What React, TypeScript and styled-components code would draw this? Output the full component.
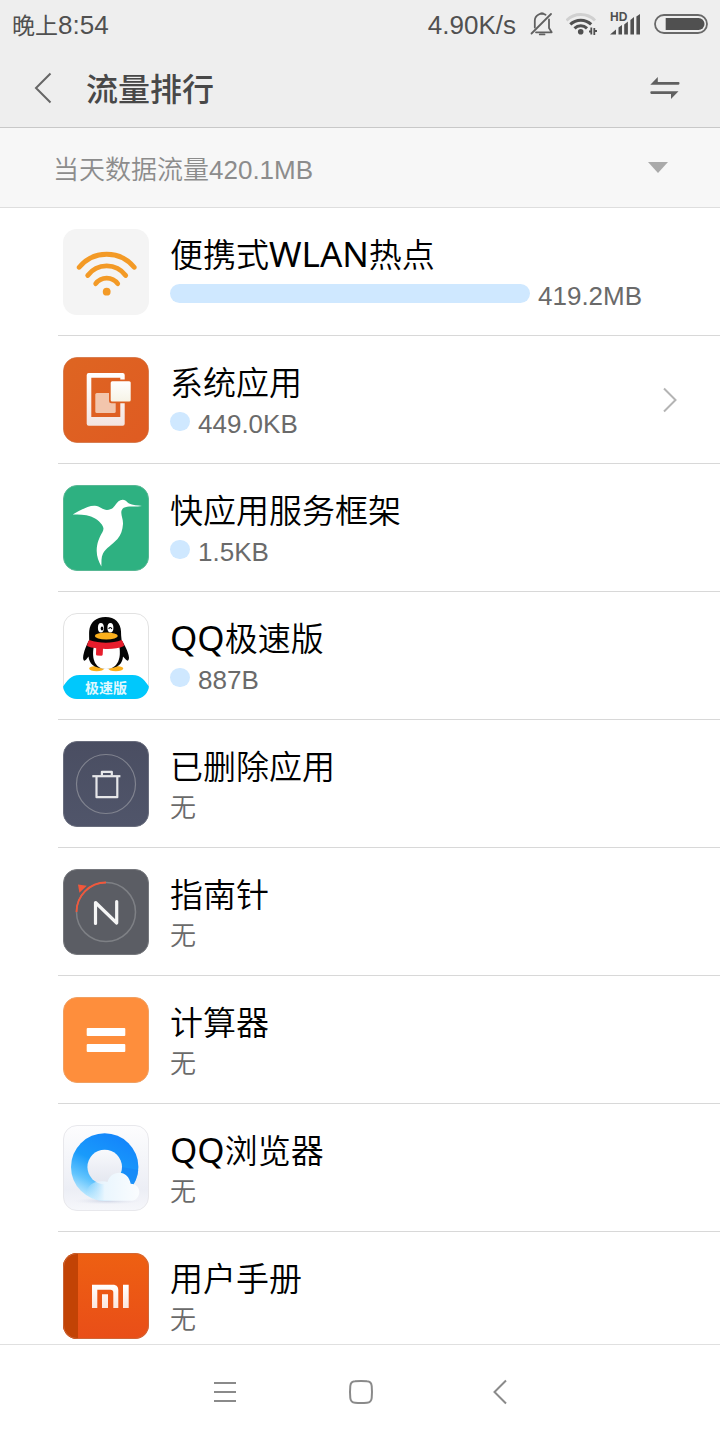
import React from "react";
import styled, { createGlobalStyle } from "styled-components";

const GlobalStyle = createGlobalStyle`
  *, *::before, *::after { box-sizing: border-box; }
  body {
    margin: 0;
    background: #fff;
    font-family: "Liberation Sans", "Noto Sans CJK SC", sans-serif;
    color: #000;
  }
  button, select {
    margin: 0;
    padding: 0;
    border: 0;
    background: none;
    color: inherit;
    font: inherit;
    cursor: pointer;
  }
  svg { display: block; flex: none; }
`;

const Screen = styled.div`
  display: flex;
  flex-direction: column;
  height: 100vh;
  overflow: hidden;
`;

const TopArea = styled.header`
  flex: none;
  background: #eee;
  border-bottom: 1px solid #c8c8c8;
`;

const StatusBar = styled.div`
  display: flex;
  align-items: center;
  justify-content: space-between;
  height: 48px;
  padding: 0 12px;
  font-size: 26px;
  line-height: 48px;
  color: #505050;
`;

const Clock = styled.span`
  display: flex;
  align-items: baseline;
  padding-top: 2px;
`;

const ClockPeriod = styled.span`
  font-size: 23px;
`;

const StatusIcons = styled.div`
  display: flex;
  align-items: center;
  gap: 12px;
`;

const NetworkSpeed = styled.span`
  padding: 2px 2px 0 0;
`;

const TitleBar = styled.div`
  display: flex;
  align-items: center;
  height: 79px;
  padding: 0 40px 0 22px;
`;

const BackButton = styled.button`
  display: flex;
  width: 64px;
  padding-left: 12px;
`;

const Title = styled.h1`
  flex: 1;
  margin: 0;
  padding-top: 5px;
  font-size: 32px;
  line-height: 48px;
  font-weight: 500;
  color: #484848;
`;

const IconButton = styled.button`
  display: flex;
`;

const FilterBar = styled.div`
  display: flex;
  align-items: center;
  flex: none;
  height: 80px;
  padding: 0 52px 0 53px;
  background: #f7f7f7;
  border-bottom: 1px solid #dedede;
`;

const RangeSelect = styled.select`
  flex: 1;
  height: 79px;
  padding-top: 5px;
  appearance: none;
  font-size: 26px;
  font-weight: 350;
  color: #8c8c8c;
  outline: none;
`;

const AppList = styled.ul`
  flex: 1;
  min-height: 0;
  margin: 0;
  padding: 0 0 0 58px;
  list-style: none;
  overflow-y: auto;
  scrollbar-width: none;
`;

const AppItem = styled.li`
  display: flex;
  align-items: center;
  gap: 21px;
  height: 128px;
  padding: 0 41px 0 5px;
  border-bottom: 1px solid #d8d8d8;
`;

const AppBody = styled.div`
  flex: 1;
  min-width: 0;
  padding-top: 5px;
`;

const AppName = styled.div`
  font-family: "Noto Sans", "Noto Sans CJK SC", sans-serif;
  font-size: 33px;
  line-height: 44px;
  font-weight: 350;
  white-space: nowrap;
`;

const LatinPart = styled.span`
  font-size: 35px;
  line-height: 1;
  font-weight: 400;
`;

const Usage = styled.div`
  display: flex;
  align-items: center;
  gap: 8px;
  height: 38px;
  font-size: 26px;
  line-height: 38px;
  font-weight: 350;
  color: #6a6a6a;
`;

const UsageBar = styled.span`
  flex: none;
  min-width: 20px;
  height: 19px;
  margin-bottom: 5px;
  border-radius: 10px;
  background: #cfe8ff;
`;

const NavBar = styled.nav`
  display: flex;
  align-items: center;
  justify-content: center;
  flex: none;
  height: 96px;
  padding-bottom: 2px;
  border-top: 1px solid #e0e0e0;
  background: #fff;
`;

const NavButton = styled.button`
  display: flex;
  justify-content: center;
  width: 137px;
`;

const Tile = ({ children }: { children: React.ReactNode }) => (
  <svg width="86" height="86" viewBox="0 0 86 86" aria-hidden="true">
    {children}
  </svg>
);

const HotspotIcon = () => (
  <Tile>
    <rect width="86" height="86" rx="14" fill="#f4f4f4" />
    <g fill="none" stroke="#f39a26" strokeWidth="4.8" strokeLinecap="round">
      <path d="M16.2 38.3A35.500 35.500 0 0 1 71.2 38.3" />
      <path d="M24.700 46.500A23.500 23.500 0 0 1 62.700 46.500" />
      <path d="M32.700 54.700A13.500 13.500 0 0 1 54.700 54.700" />
    </g>
    <circle cx="43.7" cy="62.7" r="3.9" fill="#f39a26" />
  </Tile>
);

const SystemIcon = () => (
  <Tile>
    <defs>
      <linearGradient id="sysBg" x1="0" y1="0" x2="1" y2="1">
        <stop offset="0" stopColor="#de6522" />
        <stop offset="1" stopColor="#df5b22" />
      </linearGradient>
      <linearGradient id="sysPhone" x1="0" y1="0" x2="0" y2="1">
        <stop offset="0" stopColor="#fff" />
        <stop offset="1" stopColor="#f3e4e0" />
      </linearGradient>
      <linearGradient id="sysCard" x1="0" y1="0" x2="0" y2="1">
        <stop offset="0" stopColor="#fff" />
        <stop offset="1" stopColor="#f6f3e6" />
      </linearGradient>
    </defs>
    <rect x=".5" y=".5" width="85" height="85" rx="13.5" fill="url(#sysBg)" stroke="#cf6a38" strokeOpacity=".7" />
    <path
      fillRule="evenodd"
      fill="url(#sysPhone)"
      d="M25.7 16H59.7A2 2 0 0 1 61.7 18V66.7A2 2 0 0 1 59.7 68.7H25.7A2 2 0 0 1 23.7 66.7V18A2 2 0 0 1 25.7 16ZM28.3 20.7V60H57.3V20.7Z"
    />
    <rect x="32.3" y="36" width="20.4" height="20" rx="1.5" fill="#f2c5ac" />
    <rect x="46" y="22.6" width="23.4" height="23.6" rx="2.5" fill="#dd6022" />
    <rect x="47.7" y="24.3" width="20" height="20.2" rx="1.5" fill="url(#sysCard)" />
  </Tile>
);

const BirdIcon = () => (
  <Tile>
    <rect x=".5" y=".5" width="85" height="85" rx="13.5" fill="#2eb181" stroke="#58b894" />
    <path
      fill="#fff"
      d="M9.7 29.5C17 25.5 25 20.3 32 20.7C37 21.2 39.5 24.9 44 24.9C48.500 24.900 50.500 22.500 52.300 20C54.500 17 56.500 14.500 60 14.700C63 15 64 17.200 66 18.600C69.500 20.300 75 20.500 79 21C74 22 68.500 21.400 64.300 21.700C60 22.200 58.300 24.500 58.300 27.800C58.400 31.500 60.200 34.500 60 39C59.600 45 58 50 54.500 54C49 60 43 63 40 68.500C38 72.500 38.600 77 38.400 81.500C35.500 76.500 33.500 71 33.700 65C34 58.500 35.500 55 37.300 51C38.800 48 40.800 46 40.400 43C39.500 38.500 33.500 33.500 28 31.500C22 29.500 15.500 29.700 9.700 29.500Z"
    />
  </Tile>
);

const PenguinIcon = () => (
  <Tile>
    <defs>
      <clipPath id="qqClip">
        <rect width="86" height="86" rx="14" />
      </clipPath>
    </defs>
    <rect x=".5" y=".5" width="85" height="85" rx="13.5" fill="#fff" stroke="#e2e2e2" />
    <ellipse cx="33.600" cy="55.600" rx="7.500" ry="2.700" fill="#fcb01c" />
    <ellipse cx="52.800" cy="55.600" rx="7.500" ry="2.700" fill="#fcb01c" />
    <path
      fill="#050505"
      d="M42.500 4C52 4 57.800 10 58 18.500C58 21 58.200 24 58.600 27C61.500 32 65.500 39 66 44.500C66.100 47.500 64.500 48.500 63 46.800L60 43.500C59.500 50 56 55.500 43 55.500C30 55.500 26.200 50 25.500 43.500L23 46.800C21.500 48.500 20 47.500 20.100 44.500C20.500 39 23.500 32 26.200 27C26.200 23 26 20 26.200 18C27 9.500 33 4 42.500 4Z"
    />
    <path fill="#fff" d="M31 33C28.500 43 30.500 56 43 56C56 56 58.500 43 56 32Z" />
    <ellipse cx="37.900" cy="14.800" rx="3" ry="4.800" fill="#fff" />
    <ellipse cx="47.400" cy="14.800" rx="3" ry="4.800" fill="#fff" />
    <ellipse cx="39" cy="15.500" rx="1.300" ry="1.900" fill="#050505" />
    <path d="M45.800 16C46.200 14 48.200 14 48.800 16" fill="none" stroke="#050505" strokeWidth="1.200" />
    <ellipse cx="43.300" cy="23" rx="11.500" ry="3.400" fill="#fcb01c" />
    <path
      fill="#e71d2c"
      d="M26.300 27C37 30.600 49 30.600 58.600 27C60 28.500 60.900 30.500 61 33C55 35.800 47 36.400 40 35.800L39.700 41.600Q39.500 42.800 38.300 42.800L34.300 42.600Q33 42.500 33 41.200L33.200 35.200C29.500 34.800 26.500 34.200 24.200 33C24.200 30.500 25 28.500 26.300 27Z"
    />
    <g clipPath="url(#qqClip)">
      <path fill="#00c8fc" d="M0 73.500C4 68 7.500 62 16.500 62H69.500C78.500 62 82 68 86 73.500V86H0Z" />
    </g>
    <text
      x="43"
      y="80"
      textAnchor="middle"
      fontFamily="Noto Sans CJK SC, sans-serif"
      fontSize="14"
      fontWeight="700"
      fill="#fff"
      fillOpacity=".9"
    >
      极速版
    </text>
  </Tile>
);

const TrashIcon = () => (
  <Tile>
    <defs>
      <linearGradient id="trashBg" x1="0" y1="0" x2="0" y2="1">
        <stop offset="0" stopColor="#4a4e62" />
        <stop offset="1" stopColor="#50556a" />
      </linearGradient>
    </defs>
    <rect x=".5" y=".5" width="85" height="85" rx="13.5" fill="url(#trashBg)" stroke="#696d7d" />
    <circle cx="43" cy="43" r="29.500" fill="none" stroke="#80838f" strokeWidth="1.200" />
    <g fill="none" stroke="#e6e7e9" strokeWidth="2.200" strokeLinejoin="round">
      <path d="M29.300 35.200H57.400" />
      <path d="M38.900 34.500V30.800H48.800V34.500" />
      <path d="M33.500 35.500V56.200H54.300V35.500" />
    </g>
  </Tile>
);

const CompassIcon = () => (
  <Tile>
    <rect x=".5" y=".5" width="85" height="85" rx="13.5" fill="#5b5d64" stroke="#76787d" />
    <circle cx="43" cy="43" r="29.500" fill="none" stroke="#7e8085" strokeWidth="1.500" />
    <path d="M13.500 43A29.500 29.500 0 0 1 43 13.500" fill="none" stroke="#f2573a" strokeWidth="1.800" />
    <path d="M15 15.500L23.800 16.700L16.400 23.800Z" fill="#f2573a" />
    <path
      d="M32.500 54.500V33.500L53.700 54V32.500"
      fill="none"
      stroke="#f5f5f5"
      strokeWidth="3.200"
      strokeLinecap="round"
      strokeLinejoin="round"
    />
  </Tile>
);

const CalculatorIcon = () => (
  <Tile>
    <rect x=".5" y=".5" width="85" height="85" rx="13.5" fill="#fe8e3c" stroke="#f0a062" />
    <rect x="23.700" y="31" width="38.600" height="8" rx="1" fill="#fff" />
    <rect x="23.700" y="47" width="38.600" height="8" rx="1" fill="#fff" />
  </Tile>
);

const BrowserIcon = () => (
  <Tile>
    <defs>
      <linearGradient id="brBg" x1="0" y1="0" x2="0" y2="1">
        <stop offset="0" stopColor="#fdfdfe" />
        <stop offset=".75" stopColor="#eceef5" />
        <stop offset="1" stopColor="#f6f7fb" />
      </linearGradient>
      <linearGradient id="brRing" x1=".75" y1=".1" x2=".3" y2="1">
        <stop offset="0" stopColor="#1487fb" />
        <stop offset=".45" stopColor="#199bfb" />
        <stop offset=".75" stopColor="#62c4fd" />
        <stop offset="1" stopColor="#c6ecff" />
      </linearGradient>
      <linearGradient id="brHole" x1="0" y1="0" x2="0" y2="1">
        <stop offset="0" stopColor="#f8f9fc" />
        <stop offset="1" stopColor="#e3e6ef" />
      </linearGradient>
      <linearGradient id="brCloud" x1="0" y1="0" x2="1" y2="0">
        <stop offset="0" stopColor="#e3f5ff" stopOpacity="0" />
        <stop offset=".35" stopColor="#eaf6fe" />
        <stop offset="1" stopColor="#fafcfe" />
      </linearGradient>
      <radialGradient id="brShade">
        <stop offset="0" stopColor="#b3bdd6" />
        <stop offset="1" stopColor="#dfe3ee" stopOpacity="0" />
      </radialGradient>
    </defs>
    <rect x=".5" y=".5" width="85" height="85" rx="13.5" fill="url(#brBg)" stroke="#e8e8ec" />
    <ellipse cx="44" cy="76" rx="34" ry="3.500" fill="url(#brShade)" opacity=".6" />
    <circle cx="41.700" cy="42" r="33.700" fill="url(#brRing)" />
    <path d="M66 65A33.700 33.700 0 0 0 75.300 45L58 42Z" fill="#157ff6" opacity=".5" />
    <circle cx="41.700" cy="42" r="17.300" fill="url(#brHole)" />
    <path
      fill="url(#brCloud)"
      d="M41 75.800C33 75.500 27 73 23 70C23 63 29 56 37 56.500C40 56 42.500 56.500 44.500 57C46 51.500 50.500 47.700 56.300 47.700C62 47.700 66.500 52 67.700 58.800C73 58.800 76.300 62.800 76.300 67.200C76.300 72 72.500 75.800 68 75.800Z"
    />
  </Tile>
);

const ManualIcon = () => (
  <Tile>
    <defs>
      <linearGradient id="miBg" x1="0" y1="0" x2="0" y2="1">
        <stop offset="0" stopColor="#ee6012" />
        <stop offset="1" stopColor="#e94e18" />
      </linearGradient>
      <linearGradient id="miInk" x1="0" y1="0" x2="0" y2="1">
        <stop offset="0" stopColor="#fff" />
        <stop offset="1" stopColor="#fce6dd" />
      </linearGradient>
    </defs>
    <rect width="86" height="86" rx="14" fill="url(#miBg)" />
    <path d="M15 0H14A14 14 0 0 0 0 14V72A14 14 0 0 0 14 86H15Z" fill="#c24305" />
    <rect x=".5" y=".5" width="85" height="85" rx="13.500" fill="none" stroke="#c96c40" strokeOpacity=".8" />
    <path
      fill="url(#miInk)"
      d="M29 31.700H50C53.500 31.700 55.300 33.800 55.300 37V55H50.300V39.500C50.300 37.500 49.300 36.700 47.500 36.700H34.300V55H29ZM39 41.300H45V55H39ZM60 31.700H65.700V55H60Z"
    />
  </Tile>
);

const BellOffIcon = () => (
  <svg width="24" height="24" viewBox="0 0 24 24" fill="none" stroke="#606060" strokeWidth="1.800" strokeLinecap="round" strokeLinejoin="round">
    <path d="M1.500 21.500L21 2" />
    <path d="M4.800 15.500V9A7 7 0 0 1 15.500 2.800" />
    <path d="M19 7.500V16L21.700 20.300H6" />
    <path d="M9.800 22.400H14.500" />
    <path d="M11 1.500H13" />
  </svg>
);

const WifiStatusIcon = () => (
  <svg width="32" height="24" viewBox="0 0 32 24" fill="none">
    <path d="M.5 8.500A20 20 0 0 1 29 8.500" stroke="#d0d0d0" strokeWidth="3" />
    <path d="M4.300 12.400A15 15 0 0 1 25.200 12.400" stroke="#505050" strokeWidth="3" />
    <path d="M8.500 16.300A9 9 0 0 1 21 16.300" stroke="#505050" strokeWidth="3" />
    <circle cx="14.700" cy="19.700" r="2.800" fill="#505050" />
    <path d="M25.300 15.500V22.500M28.300 16V23M23 19.500H25.500M28.500 19H31" stroke="#505050" strokeWidth="1.800" />
  </svg>
);

const SignalIcon = () => (
  <svg width="32" height="36" viewBox="0 -6 32 36" fill="#505050">
    <text x="0" y="9" fontFamily="Liberation Sans, sans-serif" fontSize="12" fontWeight="700">
      HD
    </text>
    <path d="M0 22.600L6 17.500V22.600Z" />
    <path d="M8.500 15.500L12 13V22.600H8.500Z" />
    <path d="M14.200 12.500L17.900 9.500V22.600H14.200Z" />
    <path d="M20.400 8L24 5V22.600H20.400Z" />
    <path d="M26.400 4.500L30 2V22.600H26.400Z" />
  </svg>
);

const BatteryIcon = () => (
  <svg width="54" height="20" viewBox="0 0 54 20">
    <rect x="1" y="1" width="52" height="18" rx="9" fill="none" stroke="#686868" strokeWidth="1.800" />
    <path d="M11.700 4H44.500A6 6 0 0 1 44.500 16H11.700Z" fill="#505050" />
  </svg>
);

const ChevronLeft = () => (
  <svg width="18" height="32" viewBox="0 0 18 32" fill="none" stroke="#666" strokeWidth="2">
    <path d="M16.500 1.500L2 16L16.500 30.500" />
  </svg>
);

const ChevronRight = () => (
  <svg width="18" height="26" viewBox="0 0 18 26" fill="none" stroke="#b4b4b4" strokeWidth="2">
    <path d="M3 1.500L14.500 13L3 24.500" />
  </svg>
);

const SwapIcon = () => (
  <svg width="30" height="24" viewBox="0 0 30 24" fill="#606060">
    <path d="M0.300 8.700L7.800 1V6H28.500Q29.500 6 29.500 7.300Q29.500 8.700 28.500 8.700Z" />
    <path d="M28.500 15.200L21 23V17.900H1.300Q.3 17.900 .3 16.600Q.3 15.200 1.300 15.200Z" />
  </svg>
);

const CaretIcon = () => (
  <svg width="20" height="12" viewBox="0 0 20 12" aria-hidden="true">
    <path d="M0 0H20L10 11Z" fill="#aaa" />
  </svg>
);

type AppEntry = {
  name: string;
  Icon: React.FC;
  usage: string;
  share?: number;
  expandable?: boolean;
};

const apps: AppEntry[] = [
  { name: "便携式WLAN热点", Icon: HotspotIcon, usage: "419.2MB", share: 1 },
  { name: "系统应用", Icon: SystemIcon, usage: "449.0KB", share: 0.001, expandable: true },
  { name: "快应用服务框架", Icon: BirdIcon, usage: "1.5KB", share: 0 },
  { name: "QQ极速版", Icon: PenguinIcon, usage: "887B", share: 0 },
  { name: "已删除应用", Icon: TrashIcon, usage: "无" },
  { name: "指南针", Icon: CompassIcon, usage: "无" },
  { name: "计算器", Icon: CalculatorIcon, usage: "无" },
  { name: "QQ浏览器", Icon: BrowserIcon, usage: "无" },
  { name: "用户手册", Icon: ManualIcon, usage: "无" },
];

const renderName = (name: string) =>
  name
    .split(/([A-Z]+)/)
    .filter(Boolean)
    .map((part) => (/^[A-Z]/.test(part) ? <LatinPart key={part}>{part}</LatinPart> : part));

export default function App() {
  return (
    <Screen>
      <GlobalStyle />
      <TopArea>
        <StatusBar>
          <Clock>
            <ClockPeriod>晚上</ClockPeriod>8:54
          </Clock>
          <StatusIcons>
            <NetworkSpeed>4.90K/s</NetworkSpeed>
            <BellOffIcon />
            <WifiStatusIcon />
            <SignalIcon />
            <BatteryIcon />
          </StatusIcons>
        </StatusBar>
        <TitleBar>
          <BackButton aria-label="返回">
            <ChevronLeft />
          </BackButton>
          <Title>流量排行</Title>
          <IconButton aria-label="切换">
            <SwapIcon />
          </IconButton>
        </TitleBar>
      </TopArea>
      <FilterBar>
        <RangeSelect aria-label="统计范围">
          <option>当天数据流量420.1MB</option>
        </RangeSelect>
        <CaretIcon />
      </FilterBar>
      <AppList>
        {apps.map(({ name, Icon, usage, share, expandable }) => (
          <AppItem key={name}>
            <Icon />
            <AppBody>
              <AppName>{renderName(name)}</AppName>
              <Usage>
                {share !== undefined && <UsageBar style={{ width: `${share * 50}vw` }} />}
                {usage}
              </Usage>
            </AppBody>
            {expandable && (
              <IconButton aria-label="展开">
                <ChevronRight />
              </IconButton>
            )}
          </AppItem>
        ))}
      </AppList>
      <NavBar>
        <NavButton aria-label="菜单">
          <svg width="28" height="28" viewBox="0 0 28 28" fill="none" stroke="#8a8a8a" strokeWidth="2">
            <path d="M5 5H27M5 14H27M5 23H27" />
          </svg>
        </NavButton>
        <NavButton aria-label="主屏幕">
          <svg width="28" height="28" viewBox="0 0 28 28" fill="none" stroke="#8a8a8a" strokeWidth="2">
            <path d="M9 3.300Q15 2.700 21 3.300Q25.300 3.500 25.700 8Q26.300 14 25.700 20Q25.300 24.500 21 24.700Q15 25.300 9 24.700Q4.700 24.500 4.300 20Q3.700 14 4.300 8Q4.700 3.500 9 3.300Z" />
          </svg>
        </NavButton>
        <NavButton aria-label="后退">
          <svg width="28" height="28" viewBox="0 0 28 28" fill="none" stroke="#8a8a8a" strokeWidth="2">
            <path d="M23 2.500L11.500 14L23 25.500" />
          </svg>
        </NavButton>
      </NavBar>
    </Screen>
  );
}
